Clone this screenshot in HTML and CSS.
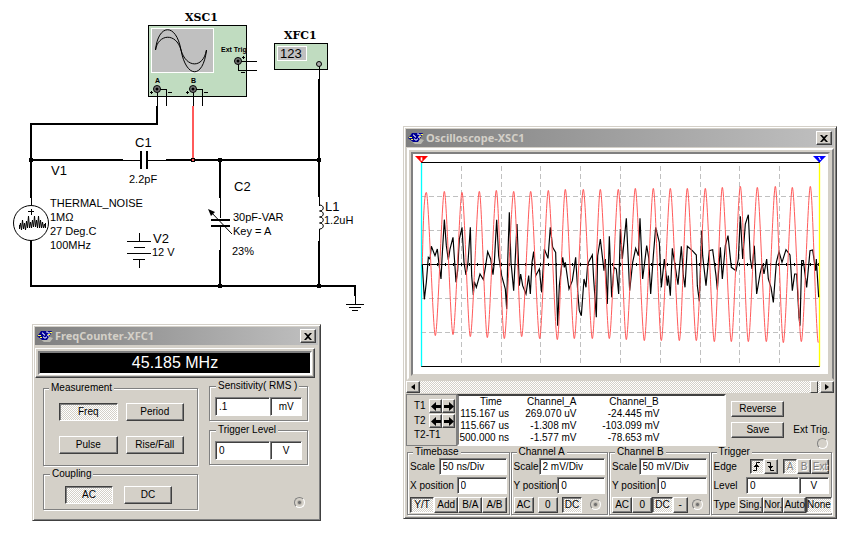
FILE: index.html
```html
<!DOCTYPE html>
<html lang="en">
<head>
<meta charset="utf-8">
<title>Circuit simulation</title>
<link rel="stylesheet" href="styles.css">
</head>
<body>
<svg width="0" height="0" class="defs" aria-hidden="true">
  <symbol id="app-icon" viewBox="0 0 16 12">
    <path d="M1 9h2l4 3h6l3-4-3-1z" fill="#b8b8b0"/>
    <path d="M4 1h11l-2 4-3 5H5L0 6l2-2z" fill="#000090"/>
    <path d="M5 3h1v1h1v1h1M9 2h2v1h2M6 7h1v1h2V7h1M10 5h1v1h1" fill="none" stroke="#d8d8ff"/>
    <path d="M1 5h3v1H1zM13 2h2v1h-2zM3 7h2v1H3zM11 4h2v1h-2z" fill="#ffff40"/>
  </symbol>
  <symbol id="close-icon" viewBox="0 0 8 7">
    <path d="M0 0h2l2 2 2-2h2L5 3.500 8 7H6L4 5 2 7H0l3-3.500z" fill="#000"/>
  </symbol>
  <symbol id="arrow-left" viewBox="0 0 10 9">
    <path d="M0 4.500 5 0v3h5v3H5v3z"/>
  </symbol>
  <symbol id="arrow-right" viewBox="0 0 10 9">
    <path d="M10 4.500 5 0v3H0v3h5v3z"/>
  </symbol>
</svg>

<main class="desktop">
  <svg class="schematic" viewBox="0 0 380 320" role="img" aria-label="Schematic">
    <!-- instruments -->
    <g shape-rendering="crispEdges">
      <rect x="148.500" y="25.500" width="98" height="71" fill="#c0dcc0" stroke="#000"/>
      <rect x="151.500" y="28.500" width="62" height="44" fill="#c0c0c0" stroke="#fff"/>
      <rect x="274.500" y="43.500" width="53" height="26" fill="#c0dcc0" stroke="#000"/>
      <rect x="277.500" y="46.500" width="29" height="14" fill="#c0c0c0" stroke="#fff"/>
    </g>
    <path d="M155.500 50C158 24 176 22 181 50S203 80 206.500 50M155.500 50C158 34 176 32 181 50S203 69 206.500 50" class="thin"/>
    <g class="thin" shape-rendering="crispEdges">
      <path d="M238.500 61.500h18M238.500 61.500v9h18M157.500 89v18M157.500 89.500h9v16M193.500 89v18M193.500 89.500h9v16M319.500 64v16"/>
      <path d="M242 57.500h3M243.500 56v3M241 72.500h4M150 92.500h3M151.500 91v3M168 92.500h4M186 92.500h3M187.500 91v3M204 92.500h4"/>
    </g>
    <g fill="#777" stroke="#000">
      <circle cx="238" cy="61" r="3.500"/><circle cx="157" cy="89" r="3.500"/><circle cx="193" cy="89" r="3.500"/>
      <circle cx="319" cy="64" r="2.500" fill="#aaa"/>
    </g>
    <g><circle cx="238" cy="61" r="1.500"/><circle cx="157" cy="89" r="1.500"/><circle cx="193" cy="89" r="1.500"/></g>
    <text x="185" y="21" class="name">XSC1</text>
    <text x="284" y="39" class="name">XFC1</text>
    <text x="280" y="58" class="digits">123</text>
    <text x="221" y="52" class="pin">Ext Trig</text>
    <text x="155" y="83" class="pin">A</text>
    <text x="191" y="83" class="pin">B</text>

    <!-- wires -->
    <g class="wire" shape-rendering="crispEdges">
      <path d="M157 106v18H31v74M31 160h92M166 160h153M319 79v118M220 160v38M31 240v46h324v10M220 250v36M319 241v45"/>
    </g>
    <g class="thin" shape-rendering="crispEdges">
      <path d="M31.500 196v10M31.500 239v12M122 160.500h18M148 160.500h19M220.500 196v22M220.500 227v24M319.500 196v10M319.500 229v14M355.500 294v10M139.500 233v8M139.500 260v8"/>
      <path d="M346 304.500h18M349 307.500h12M352 310.500h6M127 241.500h24M134 247.500h11M127 253.500h24M133 259.500h12"/>
    </g>
    <path d="M193 106v53" stroke="#ff5a5a" stroke-width="2" shape-rendering="crispEdges"/>
    <path d="M141 151v18M147 151v18M211 220h19M211 226h19" class="wire" shape-rendering="crispEdges"/>
    <g shape-rendering="crispEdges">
      <path d="M29 158h4v4h-4zM218 158h4v4h-4zM317 158h4v4h-4zM218 284h4v4h-4zM317 284h4v4h-4z"/>
      <path d="M191.500 158.500h3v3h-3z" fill="#ff5a5a" stroke="#000"/>
    </g>
    <path d="M210 211l22 23" class="thin"/>
    <path d="M208 209l7 3-4 4z"/>
    <path d="M319.500 205c5 0 5 6 0 6 5 0 5 6 0 6 5 0 5 6 0 6 5 0 5 6 0 6" class="thin"/>
    <circle cx="31" cy="223" r="17.500" fill="#fff" stroke="#000"/>
    <path d="M28 211.500h6M31.500 209v6" class="thin" shape-rendering="crispEdges"/>
    <path d="M19.500 225v4l1-6 1 7 1-10 1 9 1-6 1 7 1-9 1 7 1-12 1 12 1-6 1 6 1-8 1 7 1-11 1 11 1-7 1 8 1-12 1 12 1-8 1 8 1-6 1 6 1-4 1 4v-5" class="thin"/>

    <g class="ref">
      <text x="135" y="147">C1</text><text x="51" y="175">V1</text><text x="234" y="191">C2</text>
      <text x="325" y="211">L1</text><text x="153" y="243">V2</text>
    </g>
    <g class="value">
      <text x="129" y="183">2.2pF</text>
      <text x="50" y="207">THERMAL_NOISE</text>
      <text x="50" y="221">1MΩ</text>
      <text x="50" y="235">27 Deg.C</text>
      <text x="50" y="249">100MHz</text>
      <text x="152" y="256">12 V</text>
      <text x="233" y="221">30pF-VAR</text>
      <text x="233" y="235">Key = A</text>
      <text x="232" y="255">23%</text>
      <text x="324" y="224">1.2uH</text>
    </g>
  </svg>

  <section class="window counter">
    <header class="title-bar">
      <svg class="app-icon"><use href="#app-icon"/></svg>
      <h2>FreqCounter-XFC1</h2>
      <button class="close" aria-label="Close"><svg><use href="#close-icon"/></svg></button>
    </header>
    <div class="display"><output>45.185 MHz</output></div>
    <div class="counter-body">
      <div class="column modes">
        <fieldset class="measurement">
          <legend>Measurement</legend>
          <button class="on" aria-pressed="true">Freq</button>
          <button>Period</button>
          <button>Pulse</button>
          <button>Rise/Fall</button>
        </fieldset>
        <fieldset class="coupling">
          <legend>Coupling</legend>
          <button class="on" aria-pressed="true">AC</button>
          <button>DC</button>
        </fieldset>
      </div>
      <div class="column side">
        <fieldset class="amount">
          <legend>Sensitivity( RMS )</legend>
          <input type="text" value=".1" aria-label="Sensitivity">
          <input type="text" class="unit" value="mV" aria-label="Sensitivity unit">
        </fieldset>
        <fieldset class="amount">
          <legend>Trigger Level</legend>
          <input type="text" value="0" aria-label="Trigger level">
          <input type="text" class="unit" value="V" aria-label="Trigger level unit">
        </fieldset>
        <input type="radio" class="terminal" checked aria-label="Input terminal">
      </div>
    </div>
  </section>

  <section class="window scope">
    <header class="title-bar">
      <svg class="app-icon"><use href="#app-icon"/></svg>
      <h2>Oscilloscope-XSC1</h2>
      <button class="close" aria-label="Close"><svg><use href="#close-icon"/></svg></button>
    </header>
    <div class="screen">
      <svg viewBox="-21 -75 1245 660" fill="none" stroke-width="3" role="img" aria-label="Channel A and B traces">
        <g shape-rendering="crispEdges">
          <path d="M124.500-40V558M244.500-40V558M361.500-40V558M481.500-40V558M601.500-40V558M721.500-40V558M841.500-40V558M958.500-40V558M1078.500-40V558" stroke="#c0c0c0" stroke-dasharray="15 9"/>
          <path d="M4 52.500H1198M4 154.500H1198M4 358.500H1198M4 460.500H1198" stroke="#c0c0c0" stroke-dasharray="15 9"/>
          <path d="M4-49.500H1200M4 256.500H1198M4 562.500H1200" stroke="#000"/>
          <path d="M28 256.500H1198" stroke="#000" stroke-width="9" stroke-dasharray="3 20.800"/>
        </g>
        <path d="M4.500-48V562" stroke="#00ffff" stroke-width="4"/>
        <path d="M1198.500-48V562" stroke="#ffff00" stroke-width="4"/>
        <path stroke="#000" stroke-width="3.500" d="M7 256 13 361 19 310 25 235 30 240 34 202 45 230 52 210 57 256 63 300 66 240 73 122 79 200 85 243 90 210 99 175 108 310 113 275 118 180 126 145 132 250 138 288 144 250 151 145 155 290 160 348 163 308 169 325 180 285 190 302 197 260 203 218 212 240 219 287 223 250 230 122 236 230 245 290 256 330 260 390 263 250 268 100 273 250 281 335 291 135 298 320 302 285 308 320 318 345 326 290 331 345 336 250 341 218 347 290 358 270 365 340 373 210 384 238 391 145 398 205 407 220 413 440 418 320 428 235 433 265 436 250 447 330 457 305 467 235 474 350 478 395 484 410 492 300 498 325 503 255 517 228 521 300 529 415 533 230 541 180 552 275 556 240 562 375 568 172 575 355 582 265 589 270 596 345 601 150 607 240 619 118 629 335 638 250 647 208 655 230 660 118 668 300 680 200 686 235 692 345 700 230 707 145 718 190 724 325 733 240 742 320 745 290 751 350 757 208 766 265 774 317 784 202 790 290 795 325 802 202 817 215 829 228 832 320 838 367 845 155 848 230 858 320 868 215 878 212 888 290 892 332 901 205 907 300 916 200 924 170 934 265 948 275 955 240 961 112 968 240 976 135 985 107 991 240 996 270 1003 200 1010 345 1020 285 1027 255 1032 285 1040 240 1045 300 1053 325 1060 370 1069 250 1077 218 1086 250 1098 212 1110 228 1117 335 1124 285 1130 285 1137 415 1140 440 1145 245 1150 245 1160 325 1170 215 1178 213 1187 275 1189 240 1196 355"/>
        <path stroke="#ff5a5a" d="M7 256C9 150 12 40 19 40S39 470 46 470 66 37 73 37 92 467 99 467 119 40 126 40 144 473 151 473 171 37 178 37 195 476 202 476 222 34 229 34 246 479 253 479 274 37 281 37 298 473 305 473 325 37 332 37 352 479 359 479 378 34 385 34 405 482 412 482 429 31 436 31 456 479 463 479 483 31 490 31 510 479 517 479 534 31 541 31 561 479 568 479 588 31 595 31 612 482 619 482 639 28 646 28 666 485 673 485 693 28 700 28 717 485 724 485 744 28 751 28 771 485 778 485 795 28 802 28 822 485 829 485 849 28 856 28 876 488 883 488 900 25 907 25 927 488 934 488 954 22 961 22 978 488 985 488 1005 25 1012 25 1032 488 1039 488 1059 22 1066 22 1083 491 1090 491 1110 25 1117 25 1137 488 1144 488 1164 22 1171 22 1188 491 1195 491"/>
        <path d="M-15-69H24L4.500-49z" fill="#ff0000"/><path d="M4.500-65V-55" stroke="#fff" stroke-width="5"/>
        <path d="M1179-69H1218L1198.500-49z" fill="#0000ff"/><path d="M1195-64.500H1199V-59H1203" stroke="#fff"/>
      </svg>
    </div>
    <div class="scrollbar">
      <button aria-label="Scroll left"><svg viewBox="0 0 4 6"><path d="M4 0v6L0 3z"/></svg></button>
      <span class="thumb"></span>
      <button aria-label="Scroll right"><svg viewBox="0 0 4 6"><path d="M0 0v6l4-3z"/></svg></button>
    </div>
    <div class="readout">
      <div class="cursors">
        <span>T1</span><span class="pair"><button aria-label="T1 left"><svg><use href="#arrow-left"/></svg></button><button aria-label="T1 right"><svg><use href="#arrow-right"/></svg></button></span>
        <span>T2</span><span class="pair"><button aria-label="T2 left"><svg><use href="#arrow-left"/></svg></button><button aria-label="T2 right"><svg><use href="#arrow-right"/></svg></button></span>
        <span class="delta">T2-T1</span>
      </div>
      <div class="table-box">
        <table>
          <tr><th>Time</th><th>Channel_A</th><th>Channel_B</th></tr>
          <tr><td>115.167 us</td><td>269.070 uV</td><td>-24.445 mV</td></tr>
          <tr><td>115.667 us</td><td>-1.308 mV</td><td>-103.099 mV</td></tr>
          <tr><td>500.000 ns</td><td>-1.577 mV</td><td>-78.653 mV</td></tr>
        </table>
      </div>
      <div class="actions">
        <button>Reverse</button>
        <button>Save</button>
      </div>
      <div class="external">
        <label for="ext-trig">Ext Trig.</label>
        <input type="radio" class="terminal" id="ext-trig">
      </div>
    </div>
    <div class="settings">
      <fieldset>
        <legend>Timebase</legend>
        <div class="row"><label for="tb-scale">Scale</label><input type="text" id="tb-scale" class="wide" value="50 ns/Div"></div>
        <div class="row"><label for="tb-pos">X position</label><input type="text" id="tb-pos" class="short" value="0"></div>
        <div class="row keys"><button class="on" aria-pressed="true">Y/T</button><button>Add</button><button>B/A</button><button>A/B</button></div>
      </fieldset>
      <fieldset>
        <legend>Channel A</legend>
        <div class="row"><label for="a-scale">Scale</label><input type="text" id="a-scale" class="wide" value="2 mV/Div"></div>
        <div class="row"><label for="a-pos">Y position</label><input type="text" id="a-pos" class="short" value="0"></div>
        <div class="row keys spread"><button>AC</button><button>0</button><button class="on" aria-pressed="true">DC</button><input type="radio" class="terminal" checked aria-label="Channel A terminal"></div>
      </fieldset>
      <fieldset>
        <legend>Channel B</legend>
        <div class="row"><label for="b-scale">Scale</label><input type="text" id="b-scale" class="wide" value="50 mV/Div"></div>
        <div class="row"><label for="b-pos">Y position</label><input type="text" id="b-pos" class="short" value="0"></div>
        <div class="row keys"><button>AC</button><button>0</button><button class="on" aria-pressed="true">DC</button><button class="small">-</button><input type="radio" class="terminal" checked aria-label="Channel B terminal"></div>
      </fieldset>
      <fieldset class="trigger">
        <legend>Trigger</legend>
        <div class="row">
          <span>Edge</span>
          <span class="edges slopes">
            <button class="on" aria-label="Rising edge" aria-pressed="true"><svg viewBox="0 0 9 9"><path d="M1 8.500h3.500v-8H8M2 4.500h5M3 3.500h3"/></svg></button><button aria-label="Falling edge"><svg viewBox="0 0 9 9"><path d="M1 .5h3.500v8H8M2 4.500h5M3 5.500h3"/></svg></button>
          </span>
          <span class="edges"><button class="on" disabled>A</button><button disabled>B</button><button disabled>Ext</button></span>
        </div>
        <div class="row"><label for="trig-level">Level</label><span class="amount level"><input type="text" id="trig-level" value="0"><input type="text" class="unit" value="V" aria-label="Level unit"></span></div>
        <div class="row keys"><span>Type</span><button>Sing.</button><button>Nor.</button><button>Auto</button><button class="on" aria-pressed="true">None</button></div>
      </fieldset>
    </div>
  </section>
</main>
</body>
</html>
```
FILE: styles.css
```css
* { box-sizing: border-box; }

:root {
  --face: #d4d0c8;
  --shade: #808080;
  --dark: #404040;
  --dither: repeating-conic-gradient(#fff 0 25%, #d4d0c8 0 50%) 0 0 / 2px 2px;
}

body {
  margin: 0;
  background: #fff;
  color: #000;
  font: 10px/12px "Liberation Sans", Arial, sans-serif;
}

.defs { position: absolute; }
.desktop { position: relative; min-height: 100vh; }

/* Schematic */
.schematic { display: block; width: 380px; }
.wire { fill: none; stroke: #000; stroke-width: 2; }
.thin { fill: none; stroke: #000; stroke-width: 1; }
.name { font: bold 11px "DejaVu Serif", serif; }
.digits { font-size: 13px; }
.pin { font-size: 7px; font-weight: bold; }
.ref { font-size: 13px; }
.value { font-size: 11px; }

/* Windows */
.window {
  position: absolute;
  background: var(--face);
  border: 1px solid;
  border-color: var(--face) var(--dark) var(--dark) var(--face);
  box-shadow: inset 1px 1px #fff, inset -1px -1px var(--shade);
  padding: 2px;
}
.counter { left: 32px; top: 324px; width: 289px; }
.scope { left: 403px; top: 126px; width: 434px; }

.title-bar {
  display: flex;
  align-items: center;
  gap: 2px;
  height: 18px;
  padding: 0 2px;
  background: linear-gradient(90deg, #808080, #c0c0c0);
}
.title-bar h2 {
  flex: 1;
  margin: 0;
  color: var(--face);
  font: bold 11px/18px "Noto Sans", sans-serif;
}
.app-icon { width: 16px; height: 12px; }

button {
  display: flex;
  align-items: center;
  justify-content: center;
  height: 18px;
  margin: 0;
  padding: 0;
  border: 1px solid;
  border-color: #fff var(--dark) var(--dark) #fff;
  border-radius: 0;
  box-shadow: inset -1px -1px var(--shade);
  background: var(--face);
  color: #000;
  font: inherit;
  white-space: nowrap;
}
button.on {
  border-color: var(--dark) #fff #fff var(--dark);
  box-shadow: inset 1px 1px var(--shade);
  background: var(--dither);
}
button:disabled { color: var(--shade); text-shadow: 1px 1px #fff; }
.close { width: 16px; height: 14px; }
.close svg { width: 8px; height: 7px; }

input[type="text"] {
  min-width: 0;
  height: 17px;
  margin: 0;
  padding: 0 3px;
  border: 1px solid;
  border-color: var(--shade) #fff #fff var(--shade);
  border-radius: 0;
  box-shadow: inset 1px 1px var(--dark);
  background: #fff;
  color: #000;
  font: inherit;
}

.terminal {
  appearance: none;
  flex: none;
  width: 11px;
  height: 11px;
  margin: 0;
  border: 1px solid;
  border-color: var(--shade) #fff #fff var(--shade);
  border-radius: 50%;
}
.terminal:checked { background: radial-gradient(circle, #707070 0 1px, #b8b4ac 2px, transparent 3px); }

fieldset {
  min-width: 0;
  margin: 0;
  padding: 0;
  border: 1px solid var(--shade);
  box-shadow: 1px 1px #fff, inset 1px 1px #fff;
}
legend {
  margin-left: 3px;
  padding: 0 2px;
  background: var(--face);
  line-height: 12px;
}

/* Frequency counter */
.display {
  margin: 3px 3px 0 0;
  padding: 2px;
  border: 1px solid;
  border-color: #fff var(--dark) var(--dark) #fff;
  box-shadow: inset -1px -1px var(--shade);
}
.display output {
  display: block;
  border: 2px solid;
  border-color: var(--shade) #fff #fff var(--shade);
  background: #000;
  color: #fff;
  font-size: 16px;
  line-height: 20px;
  text-align: center;
}
.counter-body {
  display: flex;
  gap: 11px;
  padding: 2px 10px 8px 8px;
}
.column { display: flex; flex-direction: column; }
.modes { flex: none; width: 155px; gap: 2px; padding-top: 2px; }
.side { flex: 1; gap: 3px; min-width: 0; }
.side .terminal { align-self: flex-end; margin: auto 3px 2px; }
.measurement {
  display: grid;
  grid-template-columns: 1fr 1fr;
  gap: 15px 8px;
  padding: 9px 13px 11px 15px;
}
.measurement legend { margin-left: -10px; }
.coupling {
  display: grid;
  grid-template-columns: 1fr 1fr;
  gap: 11px;
  padding: 6px 25px 5px 21px;
}
.coupling legend { margin-left: -15px; }
.side fieldset { padding: 5px 5px 4px; }
.side legend { margin-left: 1px; }
.amount { display: flex; }
.amount input { flex: 2; width: 0; }
.amount input.unit { flex: 1; text-align: center; }
.side .amount input { height: 19px; }

/* Oscilloscope */
.screen {
  margin: 1px 0 1px 1px;
  padding: 2px;
  border: 2px solid;
  border-color: #fff var(--shade) var(--face) #fff;
}
.screen svg {
  display: block;
  width: 100%;
  border: 2px solid;
  border-color: var(--shade) var(--face) var(--face) var(--shade);
  background: #fff;
}
.scrollbar {
  display: flex;
  justify-content: space-between;
  height: 12px;
  background: var(--dither);
}
.scrollbar button { width: 14px; height: 12px; }
.scrollbar svg { width: 4px; height: 6px; }
.thumb {
  width: 8px;
  margin-left: auto;
  margin-right: 2px;
  border: 1px solid;
  border-color: #fff var(--dark) var(--dark) #fff;
  background: var(--face);
}
.readout {
  display: flex;
  margin-top: 1px;
}
.cursors {
  display: grid;
  grid-template-columns: 15px 1fr;
  align-content: center;
  align-items: center;
  row-gap: 1px;
  width: 51px;
  padding: 0 2px 0 7px;
  border: 1px solid var(--shade);
}
.pair { display: flex; }
.pair button { width: 13px; height: 14px; }
.pair svg { width: 10px; height: 9px; }
.delta { grid-column: 1 / -1; }
.table-box {
  flex: 1;
  border: 2px solid;
  border-color: var(--dark) #fff #fff var(--shade);
  background: #fff;
}
table { border-collapse: collapse; }
th, td { height: 12px; padding: 0; font-weight: normal; text-align: right; }
th { text-align: center; }
th:nth-child(1) { width: 50px; padding-left: 14px; }
th:nth-child(2) { width: 67px; padding-left: 18px; }
th:nth-child(3) { width: 83px; padding-left: 32px; }
.actions {
  display: flex;
  flex-direction: column;
  gap: 5px;
  width: 53px;
  margin: 7px 9px 0 5px;
}
.actions button { height: 16px; }
.external {
  display: flex;
  flex-direction: column;
  align-items: flex-end;
  gap: 2px;
  margin-bottom: -3px;
  padding: 30px 4px 0 0;
  white-space: nowrap;
}
.external .terminal { margin-right: 2px; }

.settings {
  display: grid;
  grid-template-columns: 103fr 98fr 101fr 122fr;
  gap: 1px;
  padding: 0 2px 1px 1px;
}
.settings fieldset {
  display: flex;
  flex-direction: column;
  gap: 2px;
  padding: 0 2px 1px;
}
.row {
  display: flex;
  align-items: center;
  justify-content: space-between;
  height: 17px;
  white-space: nowrap;
}
.wide { width: 68px; }
.short { width: 50px; }
.keys button { flex: 1; height: 16px; }
.keys .small { flex: 0 0 15px; }
.keys .terminal { margin: 0 4px; }
.spread { gap: 4px; }
.edges { display: flex; }
.slopes { margin-left: 8px; }
.edges button { width: 14px; height: 15px; }
.edges button:nth-child(3) { width: 18px; }
.edges svg { width: 9px; height: 9px; fill: none; stroke: #000; }
.level { width: 83px; }
.trigger .keys span { margin-right: 3px; }
```
